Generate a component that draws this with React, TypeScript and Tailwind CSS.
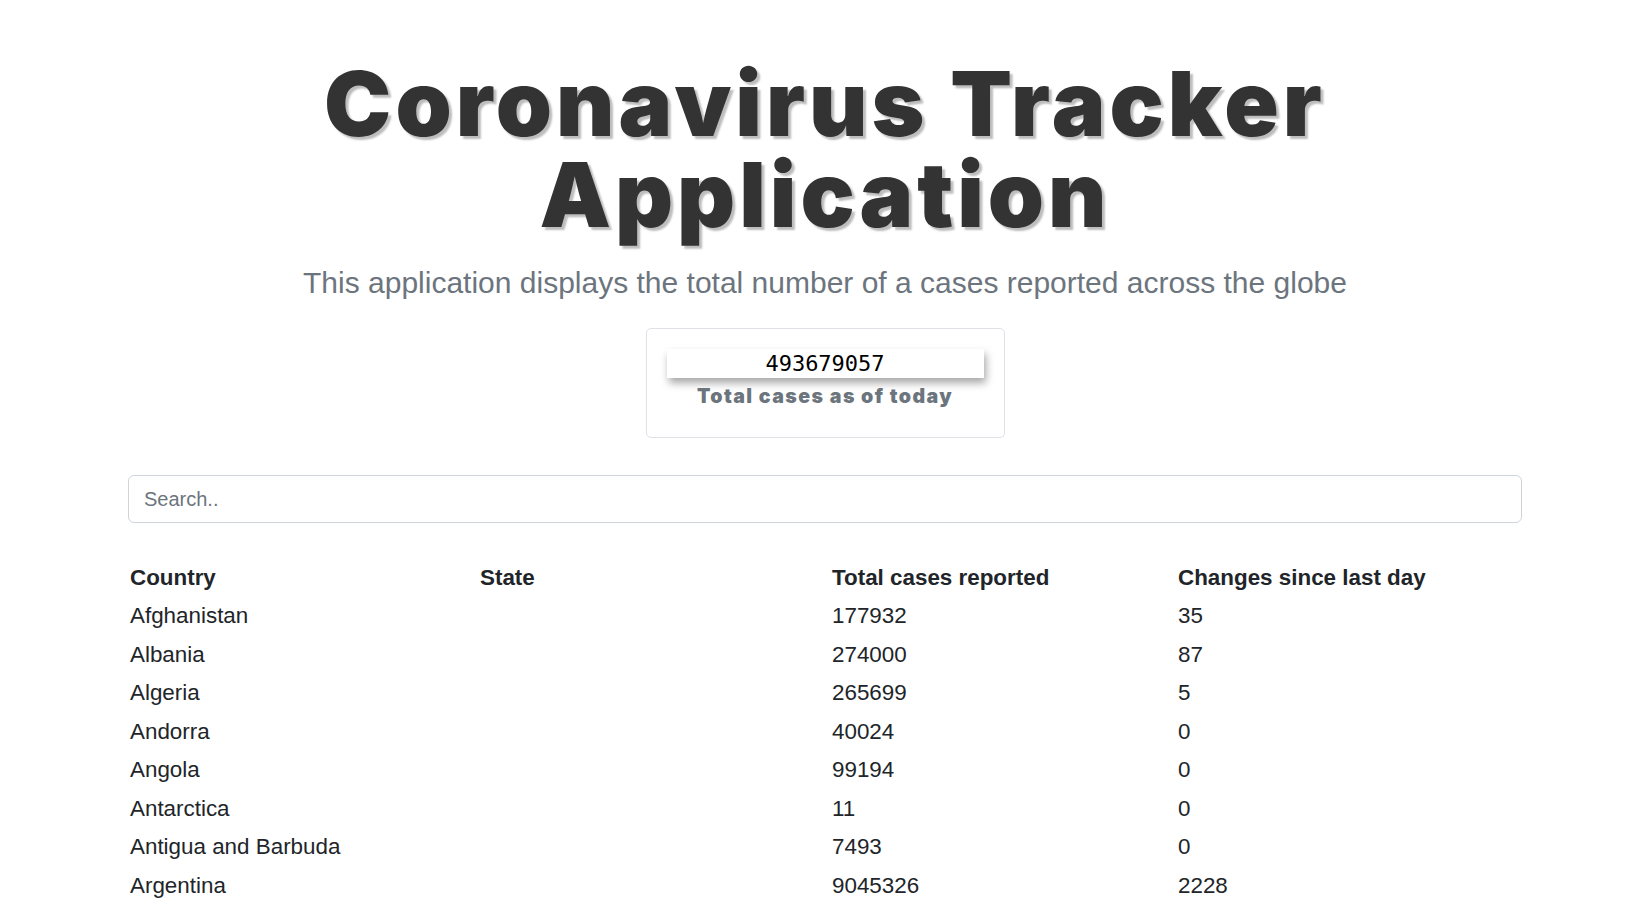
const rows = [
  { country: 'Afghanistan', state: '', total: 177932, change: 35 },
  { country: 'Albania', state: '', total: 274000, change: 87 },
  { country: 'Algeria', state: '', total: 265699, change: 5 },
  { country: 'Andorra', state: '', total: 40024, change: 0 },
  { country: 'Angola', state: '', total: 99194, change: 0 },
  { country: 'Antarctica', state: '', total: 11, change: 0 },
  { country: 'Antigua and Barbuda', state: '', total: 7493, change: 0 },
  { country: 'Argentina', state: '', total: 9045326, change: 2228 },
  { country: 'Armenia', state: '', total: 422574, change: 0 },
  { country: 'Australia', state: 'Australian Capital Territory', total: 118422, change: 1062 },
];

export default function App() {
  return (
    <div className="min-h-screen bg-white text-[#212529] font-['Liberation_Sans',Arial,sans-serif]">
      <div className="ml-[128px] w-[1394px]">
        {/* Header */}
        <h1 className="pt-[58px] text-center text-[90px] leading-[91px] font-black tracking-[4px] text-[#333333] [text-shadow:3px_3px_2px_#bdbdbd] font-['Inter',sans-serif]">
          Coronavirus Tracker
          <br />
          Application
        </h1>
        <p className="mt-[22px] text-center text-[30px] leading-[42px] text-[#6c757d]">
          This application displays the total number of a cases reported across the globe
        </p>

        {/* Total card */}
        <div className="mt-[24px] flex justify-center">
          <div className="w-[359px] h-[110px] border border-[#dee2e6] rounded-[5px] px-[20px] pt-[20px]">
            <div className="h-[29px] bg-white shadow-[2px_5px_8px_rgba(0,0,0,0.35)] text-center font-['DejaVu_Sans_Mono',monospace] text-[22px] leading-[29px] text-black">
              493679057
            </div>
            <h5 className="mt-[4px] text-center text-[19.6px] leading-[29px] font-black tracking-[1.4px] text-[#6c757d] font-['Inter',sans-serif]">
              Total cases as of today
            </h5>
          </div>
        </div>

        {/* Search */}
        <input
          type="text"
          placeholder="Search.."
          className="mt-[37px] block w-full h-[48px] rounded-[6px] border border-[#ced4da] px-[15px] text-[20px] text-[#495057] placeholder:text-[#6c757d] outline-none"
        />

        {/* Table */}
        <table className="mt-[36px] w-full table-fixed text-left text-[22.4px]">
          <colgroup>
            <col className="w-[352px]" />
            <col className="w-[350px]" />
            <col className="w-[346px]" />
            <col />
          </colgroup>
          <thead>
            <tr className="h-[38px]">
              <th className="pl-[2px] font-bold">Country</th>
              <th className="font-bold">State</th>
              <th className="pl-[2px] font-bold">Total cases reported</th>
              <th className="pl-[2px] font-bold">Changes since last day</th>
            </tr>
          </thead>
          <tbody>
            {rows.map((r) => (
              <tr key={r.country + r.state} className="h-[38.5px]">
                <td className="pl-[2px]">{r.country}</td>
                <td>{r.state}</td>
                <td className="pl-[2px]">{r.total}</td>
                <td className="pl-[2px]">{r.change}</td>
              </tr>
            ))}
          </tbody>
        </table>
      </div>
    </div>
  );
}
